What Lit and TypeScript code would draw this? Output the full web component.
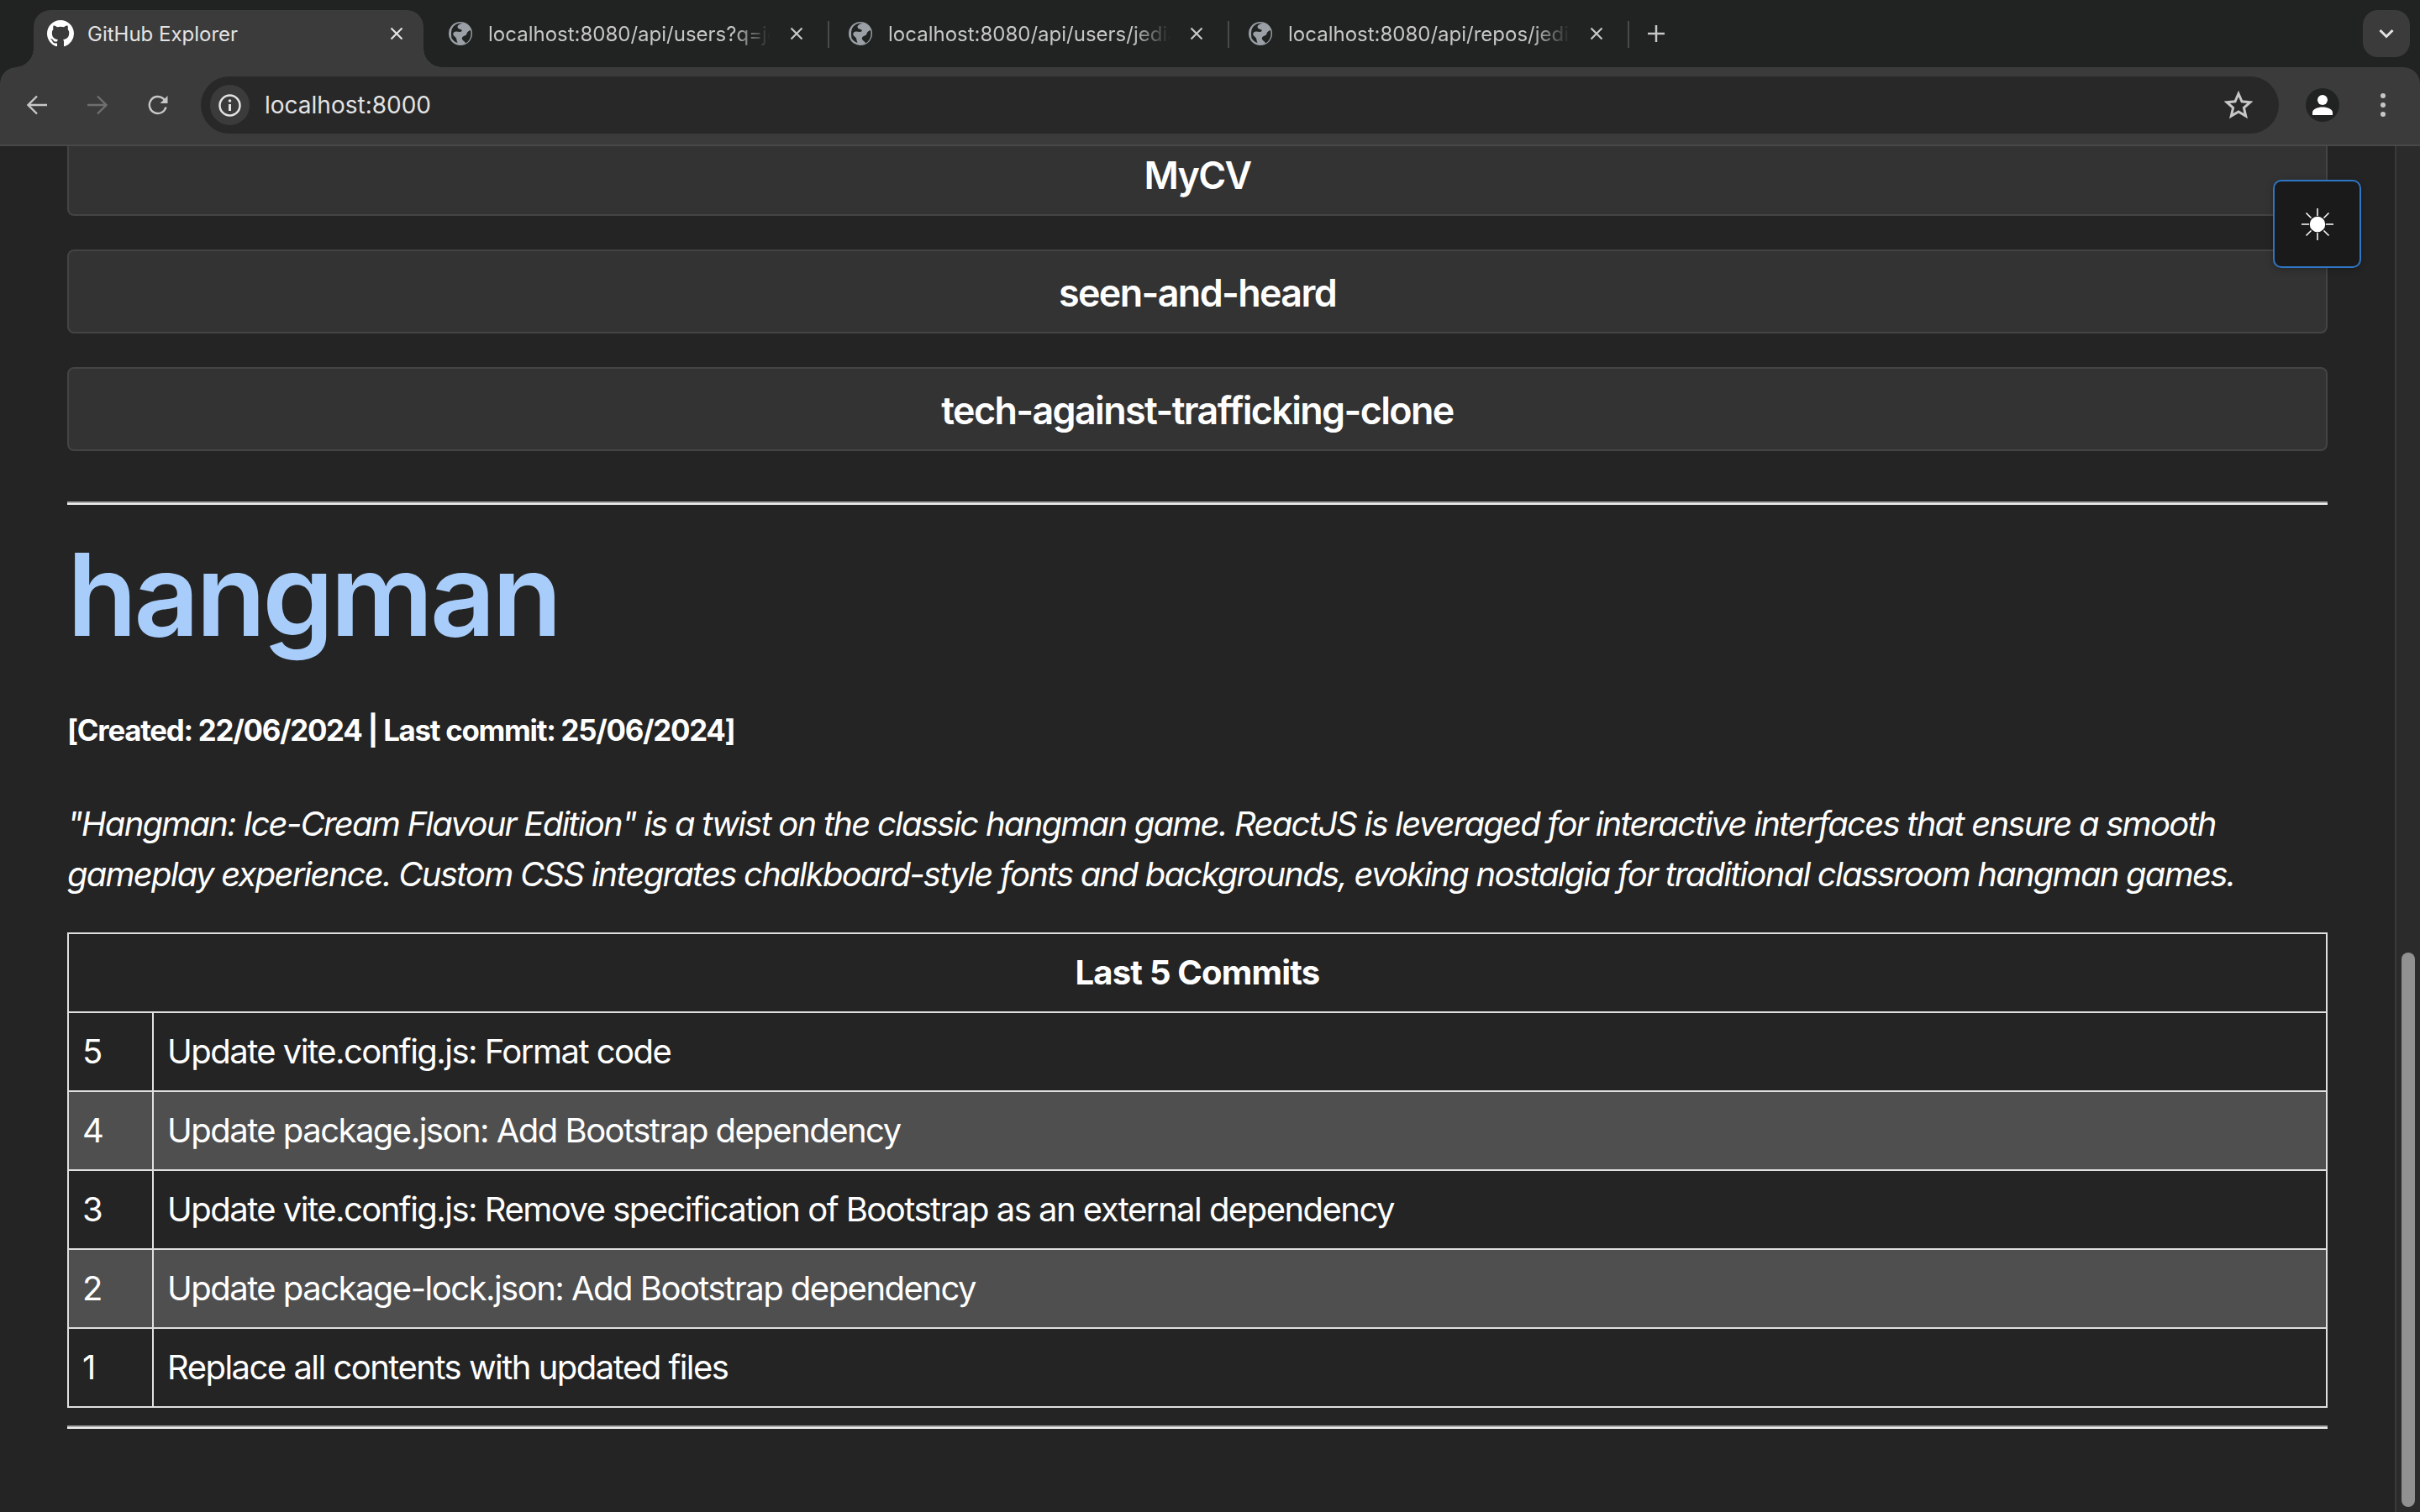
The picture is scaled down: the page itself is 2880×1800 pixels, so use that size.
import { html, css, LitElement } from 'lit';
import { customElement } from 'lit/decorators.js';

const commits = [
  'Update vite.config.js: Format code',
  'Update package.json: Add Bootstrap dependency',
  'Update vite.config.js: Remove specification of Bootstrap as an external dependency',
  'Update package-lock.json: Add Bootstrap dependency',
  'Replace all contents with updated files',
];

const tabs = ['localhost:8080/api/users?q=jo', 'localhost:8080/api/users/jedia', 'localhost:8080/api/repos/jedia'];

const closeIcon = html`<svg class="close" viewBox="0 0 16 16" fill="none" stroke="currentColor" stroke-width="2.200">
  <path d="M1.500 1.500l13 13M14.500 1.500l-13 13"></path>
</svg>`;

const globe = html`<svg class="favicon" viewBox="0 0 28 28">
  <circle cx="14" cy="14" r="14" fill="#9aa0a6"></circle>
  <path d="M17 1.500c-3 .5-6 2-6.500 4-.4 2 1.500 3 3.500 3.500 2 .5 2.500 2 .5 2.800-2 .6-5-1-7.500.2C4.500 13 5 16 7 17.500c1.500 1 2.500 2.500 2.500 4.500l1 3c-3-.8-5.500-3-7-5.500C3 16 2 9 6 5c3-3 7-4 11-3.500z" fill="#202322"></path>
  <path d="M26 10c-2 .5-4 2-4.500 4-.5 2.500-3 2.500-4.500 3.500-2 1.500-1 4 .5 5 1.500 1 2 2 2.500 3 4-2 6-6 6.500-10 .2-2-.1-4-.5-5.500z" fill="#202322"></path>
</svg>`;

const githubMark = html`<svg class="favicon" viewBox="0 0 16 16" fill="#fff">
  <path d="M8 0C3.580 0 0 3.580 0 8c0 3.540 2.290 6.530 5.470 7.590.4.070.55-.17.55-.38 0-.19-.01-.82-.01-1.490-2.010.37-2.530-.49-2.690-.94-.09-.23-.48-.94-.82-1.130-.28-.15-.68-.52-.01-.53.63-.01 1.080.58 1.230.82.72 1.210 1.870.87 2.330.66.07-.52.28-.87.51-1.070-1.780-.2-3.640-.89-3.640-3.950 0-.87.31-1.590.82-2.150-.08-.2-.36-1.020.08-2.120 0 0 .67-.21 2.200.82.64-.18 1.320-.27 2-.27.68 0 1.360.09 2 .27 1.530-1.040 2.200-.82 2.200-.82.44 1.100.16 1.920.08 2.120.51.56.82 1.270.82 2.150 0 3.070-1.870 3.750-3.650 3.950.29.25.54.73.54 1.480 0 1.070-.01 1.930-.01 2.200 0 .21.15.46.55.38A8.013 8.013 0 0016 8c0-4.420-3.580-8-8-8z"></path>
</svg>`;

@customElement('app-root')
export class AppRoot extends LitElement {
  static styles = css`
    :host {
      display: flex;
      flex-direction: column;
      width: 2880px;
      height: 1800px;
      overflow: hidden;
      background: #202322;
      font-family: Inter, 'Noto Sans', sans-serif;
    }

    /* browser chrome */
    .strip {
      display: flex;
      align-items: flex-end;
      height: 80px;
      padding-left: 40px;
      flex: none;
    }

    .tab {
      position: relative;
      display: flex;
      align-items: center;
      box-sizing: border-box;
      width: 464px;
      height: 68px;
      padding: 0 18px 12px;
      border-radius: 20px 20px 0 0;
      color: #c7c7c7;
      font-size: 24px;
    }

    .tab.active {
      padding-left: 16px;
      background: #3b3b3b;
      color: #e3e3e3;
    }

    .tab.active::before,
    .tab.active::after {
      content: '';
      position: absolute;
      bottom: 0;
      width: 22px;
      height: 22px;
    }

    .tab.active::before {
      left: -22px;
      background: radial-gradient(circle at 0 0, transparent 21.500px, #3b3b3b 22px);
    }

    .tab.active::after {
      right: -22px;
      background: radial-gradient(circle at 100% 0, transparent 21.500px, #3b3b3b 22px);
    }

    .favicon {
      width: 28px;
      height: 28px;
      flex: none;
    }

    .tab.active .favicon {
      width: 32px;
      height: 32px;
    }

    .title {
      flex: 1;
      min-width: 0;
      margin-left: 19px;
      white-space: nowrap;
      overflow: hidden;
      -webkit-mask-image: linear-gradient(to right, #000 290px, transparent 336px);
      mask-image: linear-gradient(to right, #000 290px, transparent 336px);
    }

    .tab.active .title {
      margin-left: 16px;
      -webkit-mask-image: none;
      mask-image: none;
    }

    .close {
      width: 16px;
      height: 16px;
      flex: none;
      margin: 0 6px 0 8px;
    }

    .sep-slot {
      display: flex;
      justify-content: center;
      width: 12px;
      height: 68px;
      flex: none;
    }

    .sep {
      width: 2px;
      height: 32px;
      margin-top: 13px;
      background: #4a4a4a;
    }

    .sep-slot.blank .sep {
      background: transparent;
    }

    .plus {
      width: 22px;
      height: 22px;
      margin: 0 0 29px 16px;
      flex: none;
      color: #c7c7c7;
    }

    .list-tabs {
      display: flex;
      align-items: center;
      justify-content: center;
      width: 56px;
      height: 56px;
      margin: 0 12px 12px auto;
      border-radius: 18px;
      background: #3b3b3b;
      color: #e3e3e3;
    }

    .toolbar {
      display: flex;
      align-items: center;
      box-sizing: border-box;
      height: 94px;
      flex: none;
      padding-bottom: 2px;
      background: #3b3b3b;
      border-bottom: 2px solid #484848;
      border-radius: 20px 20px 0 0;
    }

    .nav {
      display: flex;
      gap: 48px;
      align-items: center;
      width: 239px;
      box-sizing: border-box;
      padding-left: 32px;
      color: #c7c7c7;
    }

    .nav svg {
      width: 24px;
      height: 24px;
      flex: none;
    }

    .nav .dim {
      color: #6f6f6f;
    }

    .omnibox {
      display: flex;
      align-items: center;
      box-sizing: border-box;
      width: 2473px;
      height: 68px;
      padding: 0 31px 0 11px;
      border-radius: 34px;
      background: #282828;
    }

    .chip {
      display: flex;
      align-items: center;
      justify-content: center;
      width: 47px;
      height: 48px;
      border-radius: 24px;
      background: #3b3b3b;
      color: #e3e3e3;
    }

    .url {
      flex: 1;
      margin-left: 18px;
      color: #e3e3e3;
      font-size: 28px;
    }

    .star {
      width: 34px;
      height: 34px;
      color: #c7c7c7;
    }

    .avatar {
      display: flex;
      align-items: center;
      justify-content: center;
      width: 40px;
      height: 40px;
      margin-left: 32px;
      border-radius: 50%;
      background: #202322;
    }

    .dots {
      width: 6px;
      height: 28px;
      margin-left: 49px;
      color: #c7c7c7;
    }

    /* page */
    .viewport {
      position: relative;
      display: flex;
      flex: 1;
      min-height: 0;
      overflow: hidden;
      background: #242424;
      color: #fff;
    }

    .content {
      flex: 1;
      min-width: 0;
      margin-top: -17px;
      padding: 0 80px;
    }

    .card {
      display: flex;
      align-items: center;
      justify-content: center;
      box-sizing: border-box;
      height: 100px;
      margin-bottom: 40px;
      padding-top: 3px;
      border: 2px solid #444;
      border-radius: 8px;
      background: #333;
      font-size: 44.800px;
      font-weight: 600;
      letter-spacing: -0.036em;
    }

    .rule {
      height: 0;
      margin: 60px 0 0;
      border: 0;
      border-top: 2px solid #a8a8a8;
      border-bottom: 2px solid #efefef;
    }

    h1 {
      margin: 30px 0 0;
      color: #a8cdfb;
      font-size: 136px;
      line-height: 154px;
      font-weight: 600;
      letter-spacing: -0.03em;
    }

    .meta {
      margin: 60px 0 0;
      font-size: 34.800px;
      line-height: 48px;
      font-weight: 700;
      letter-spacing: -0.036em;
    }

    .desc {
      margin: 58px 0 0;
      font-size: 40px;
      line-height: 60px;
      font-style: italic;
      letter-spacing: -0.044em;
    }

    table {
      width: 100%;
      margin-top: 39px;
      border-collapse: collapse;
      font-size: 40px;
      line-height: 60px;
      letter-spacing: -0.038em;
    }

    th,
    td {
      padding: 16px;
      border: 2px solid #e0e0e0;
      text-align: left;
      font-weight: 400;
    }

    th {
      text-align: center;
      font-weight: 700;
      letter-spacing: -0.02em;
    }

    td.num {
      width: 67px;
    }

    tr.stripe td {
      background: #4f4f4f;
    }

    .bottom-rule {
      margin-top: 21px;
    }

    .scrollbar {
      position: relative;
      box-sizing: border-box;
      width: 30px;
      flex: none;
      border-left: 2px solid #3a3a3a;
      background: #2b2b2b;
    }

    .thumb {
      position: absolute;
      left: 6px;
      top: 960px;
      width: 16px;
      height: 660px;
      border-radius: 8px;
      background: #919191;
    }

    .toggle {
      position: absolute;
      top: 40px;
      right: 70px;
      display: flex;
      align-items: center;
      justify-content: center;
      box-sizing: border-box;
      width: 105px;
      height: 105px;
      padding: 0;
      border: 2px solid #2f76c4;
      border-radius: 10px;
      background: #1a1a1a;
      box-shadow: 0 2px 8px rgba(0, 0, 0, 0.25);
    }

    .toggle svg {
      width: 40px;
      height: 40px;
    }
  `;

  render() {
    return html`
      <div class="strip">
        <div class="tab active">
          ${githubMark}
          <span class="title">GitHub Explorer</span>
          ${closeIcon}
        </div>
        <div class="sep-slot blank"><div class="sep"></div></div>
        ${tabs.map(
          t => html`
            <div class="tab">
              ${globe}
              <span class="title">${t}</span>
              ${closeIcon}
            </div>
            <div class="sep-slot"><div class="sep"></div></div>
          `,
        )}
        <svg class="plus" viewBox="0 0 22 22" fill="none" stroke="currentColor" stroke-width="2.500">
          <path d="M11 1v20M1 11h20"></path>
        </svg>
        <div class="list-tabs">
          <svg width="18" height="12" viewBox="0 0 18 12" fill="none" stroke="currentColor" stroke-width="3">
            <path d="M1.500 2l7.500 7.500L16.500 2"></path>
          </svg>
        </div>
      </div>

      <div class="toolbar">
        <div class="nav">
          <svg viewBox="0 0 24 24" fill="none" stroke="currentColor" stroke-width="2.400">
            <path d="M24 12H2M12 1.500L1.500 12 12 22.500"></path>
          </svg>
          <svg class="dim" viewBox="0 0 24 24" fill="none" stroke="currentColor" stroke-width="2.400">
            <path d="M0 12h22M12 1.500L22.500 12 12 22.500"></path>
          </svg>
          <svg viewBox="0 0 24 24" fill="none" stroke="currentColor" stroke-width="2.400">
            <path d="M21.500 14.500A10 10 0 1 1 18.500 4.500L22 8"></path>
            <path d="M23.500 1v9h-9z" fill="currentColor" stroke="none"></path>
          </svg>
        </div>
        <div class="omnibox">
          <div class="chip">
            <svg width="27" height="27" viewBox="0 0 27 27" fill="none" stroke="currentColor" stroke-width="2.500">
              <circle cx="13.500" cy="13.500" r="12"></circle>
              <path d="M13.500 12v8" stroke-width="3"></path>
              <circle cx="13.500" cy="8" r="1.800" fill="currentColor" stroke="none"></circle>
            </svg>
          </div>
          <span class="url">localhost:8000</span>
          <svg class="star" viewBox="0 0 34 34" fill="none" stroke="currentColor" stroke-width="3">
            <path d="M17 3.500l4 9.300 10 .9-7.600 6.600 2.300 9.800L17 25l-8.700 5.100 2.300-9.800L3 13.700l10-.9z"></path>
          </svg>
        </div>
        <div class="avatar">
          <svg width="24" height="24" viewBox="0 0 24 24" fill="#fff">
            <circle cx="12" cy="6" r="6"></circle>
            <path d="M0 24v-3c0-4 6-6.500 12-6.500s12 2.500 12 6.500v3z"></path>
          </svg>
        </div>
        <svg class="dots" viewBox="0 0 6 28" fill="currentColor">
          <circle cx="3" cy="3" r="3"></circle>
          <circle cx="3" cy="14" r="3"></circle>
          <circle cx="3" cy="25" r="3"></circle>
        </svg>
      </div>

      <div class="viewport">
        <div class="content">
          <div class="card">MyCV</div>
          <div class="card">seen-and-heard</div>
          <div class="card">tech-against-trafficking-clone</div>
          <hr class="rule" />
          <h1>hangman</h1>
          <p class="meta">[Created: 22/06/2024 | Last commit: 25/06/2024]</p>
          <p class="desc">
            "Hangman: Ice-Cream Flavour Edition" is a twist on the classic hangman game. ReactJS is leveraged for
            interactive interfaces that ensure a smooth gameplay experience. Custom CSS integrates chalkboard-style
            fonts and backgrounds, evoking nostalgia for traditional classroom hangman games.
          </p>
          <table>
            <thead>
              <tr><th colspan="2">Last 5 Commits</th></tr>
            </thead>
            <tbody>
              ${commits.map(
                (c, i) => html`
                  <tr class=${i % 2 ? 'stripe' : ''}>
                    <td class="num">${5 - i}</td>
                    <td>${c}</td>
                  </tr>
                `,
              )}
            </tbody>
          </table>
          <hr class="rule bottom-rule" />
        </div>
        <div class="scrollbar"><div class="thumb"></div></div>
        <button class="toggle" aria-label="Toggle theme">
          <svg viewBox="0 0 40 40" fill="#fff" stroke="#fff" stroke-width="1.500">
            <circle cx="20" cy="20" r="8.500"></circle>
            <path d="M20 1v9M20 30v9M1 20h9M30 20h9M6.500 6.500l6 6M27.500 27.500l6 6M33.500 6.500l-6 6M12.500 27.500l-6 6"></path>
          </svg>
        </button>
      </div>
    `;
  }
}
